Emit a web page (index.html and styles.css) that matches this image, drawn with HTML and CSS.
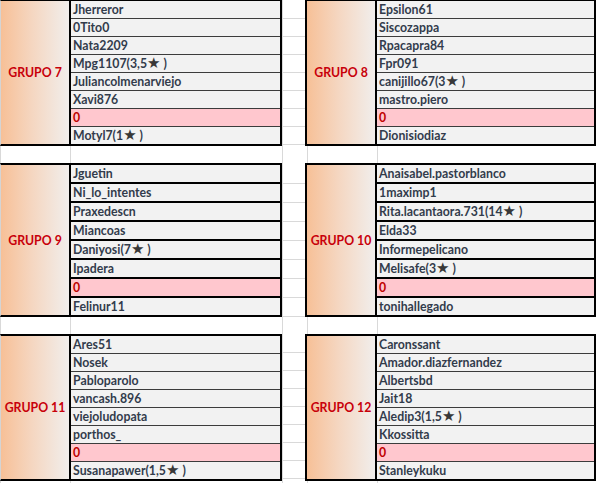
FILE: index.html
```html
<!DOCTYPE html>
<html>
<head>
<meta charset="utf-8">
<link rel="stylesheet" href="styles.css">
</head>
<body>
<div class="sheet">
  <div class="band b1">
    <div class="tbl left">
      <div class="grp">GRUPO 7</div>
      <div class="names">
        <div class="cell">Jherreror</div>
        <div class="cell">0Tito0</div>
        <div class="cell">Nata2209</div>
        <div class="cell">Mpg1107(3,5<span class="star">★</span> )</div>
        <div class="cell">Juliancolmenarviejo</div>
        <div class="cell">Xavi876</div>
        <div class="cell zero">0</div>
        <div class="cell">Motyl7(1<span class="star">★</span> )</div>
      </div>
    </div>
    <div class="gap"></div>
    <div class="tbl right">
      <div class="grp">GRUPO 8</div>
      <div class="names">
        <div class="cell">Epsilon61</div>
        <div class="cell">Siscozappa</div>
        <div class="cell">Rpacapra84</div>
        <div class="cell">Fpr091</div>
        <div class="cell">canijillo67(3<span class="star">★</span> )</div>
        <div class="cell">mastro.piero</div>
        <div class="cell zero">0</div>
        <div class="cell">Dionisiodiaz</div>
      </div>
    </div>
  </div>
  <div class="spacer"><div class="sc c1"></div><div class="sc c2"></div><div class="sc c3"></div><div class="sc c4"></div><div class="sc c5"></div></div>
  <div class="band b2">
    <div class="tbl left">
      <div class="grp">GRUPO 9</div>
      <div class="names">
        <div class="cell">Jguetin</div>
        <div class="cell">Ni_lo_intentes</div>
        <div class="cell">Praxedescn</div>
        <div class="cell">Miancoas</div>
        <div class="cell">Daniyosi(7<span class="star">★</span> )</div>
        <div class="cell">Ipadera</div>
        <div class="cell zero">0</div>
        <div class="cell">Felinur11</div>
      </div>
    </div>
    <div class="gap"></div>
    <div class="tbl right">
      <div class="grp">GRUPO 10</div>
      <div class="names">
        <div class="cell">Anaisabel.pastorblanco</div>
        <div class="cell">1maximp1</div>
        <div class="cell">Rita.lacantaora.731(14<span class="star">★</span> )</div>
        <div class="cell">Elda33</div>
        <div class="cell">Informepelicano</div>
        <div class="cell">Melisafe(3<span class="star">★</span> )</div>
        <div class="cell zero">0</div>
        <div class="cell">tonihallegado</div>
      </div>
    </div>
  </div>
  <div class="spacer"><div class="sc c1"></div><div class="sc c2"></div><div class="sc c3"></div><div class="sc c4"></div><div class="sc c5"></div></div>
  <div class="band b3">
    <div class="tbl left">
      <div class="grp">GRUPO 11</div>
      <div class="names">
        <div class="cell">Ares51</div>
        <div class="cell">Nosek</div>
        <div class="cell">Pabloparolo</div>
        <div class="cell">vancash.896</div>
        <div class="cell">viejoludopata</div>
        <div class="cell">porthos_</div>
        <div class="cell zero">0</div>
        <div class="cell">Susanapawer(1,5<span class="star">★</span> )</div>
      </div>
    </div>
    <div class="gap"></div>
    <div class="tbl right">
      <div class="grp">GRUPO 12</div>
      <div class="names">
        <div class="cell">Caronssant</div>
        <div class="cell">Amador.diazfernandez</div>
        <div class="cell">Albertsbd</div>
        <div class="cell">Jait18</div>
        <div class="cell">Aledip3(1,5<span class="star">★</span> )</div>
        <div class="cell">Kkossitta</div>
        <div class="cell zero">0</div>
        <div class="cell">Stanleykuku</div>
      </div>
    </div>
  </div>
  <div class="spacer tail"><div class="sc c1"></div><div class="sc c2"></div><div class="sc c3"></div><div class="sc c4"></div><div class="sc c5"></div></div>
</div>
</body>
</html>
```

FILE: styles.css
```css
html, body {
  margin: 0;
  padding: 0;
  background: #ffffff;
}
.sheet {
  width: 596px;
  height: 483px;
  overflow: hidden;
  display: flex;
  flex-direction: column;
  font-family: "Lato", "Liberation Sans", sans-serif;
  font-weight: 700;
  font-size: 12.3px;
  color: #323c4c;
}
.band {
  display: flex;
  flex: none;
}
.tbl {
  display: flex;
  border-bottom: 2px solid #000;
  border-top: 2px solid #000;
  border-right: 2px solid #000;
}
.b1 .tbl { border-top-width: 1px; }
.tbl.left { border-left: 1px solid #d4d4d4; width: 279px; }
.tbl.right { width: 287px; border-left: 2px solid #000; }
.grp {
  flex: none;
  display: flex;
  align-items: center;
  justify-content: center;
  background: linear-gradient(90deg, #f7c097 0%, #f5d6c0 45%, #f1eeec 100%);
  color: #c8000a;
  border-right: 2px solid #000;
  width: 68px;
}
.names {
  flex: 1;
  display: flex;
  flex-direction: column;
}
.cell {
  height: 17px;
  line-height: 17px;
  padding-left: 2px;
  background: #f2f2f2;
  border-bottom: 1px solid #3c3c3c;
  white-space: nowrap;
}
.cell:last-child { border-bottom: none; }
.b2 .cell { border-bottom: 2px solid #000; }
.b2 .cell:last-child { border-bottom: none; }
.zero {
  background: #ffc7ce;
  color: #c00000;
}
.star {
  font-family: "DejaVu Sans", sans-serif;
  color: #383838;
  font-size: 15px;
  line-height: 0;
}
.gap {
  flex: none;
  background-image: repeating-linear-gradient(180deg, transparent 0, transparent 17px, #d9d9d9 17px, #d9d9d9 18px);
  background-position: 0 1px;
  border-left: 1px solid #d9d9d9;
  width: 22px;
}
.b2 .gap {
  background-image: repeating-linear-gradient(180deg, transparent 0, transparent 18px, #d9d9d9 18px, #d9d9d9 19px);
  background-position: 0 2px;
}
.spacer {
  flex: none;
  height: 17px;
  display: flex;
}
.spacer.tail { height: 2px; }
.sc {
  flex: none;
  height: 100%;
  border-left: 1px solid #d9d9d9;
}
.c1 { width: 69px; }
.c2 { width: 211px; }
.c3 { width: 24px; }
.c4 { width: 69px; }
.c5 { width: 218px; border-right: 1px solid #d9d9d9; }
```
